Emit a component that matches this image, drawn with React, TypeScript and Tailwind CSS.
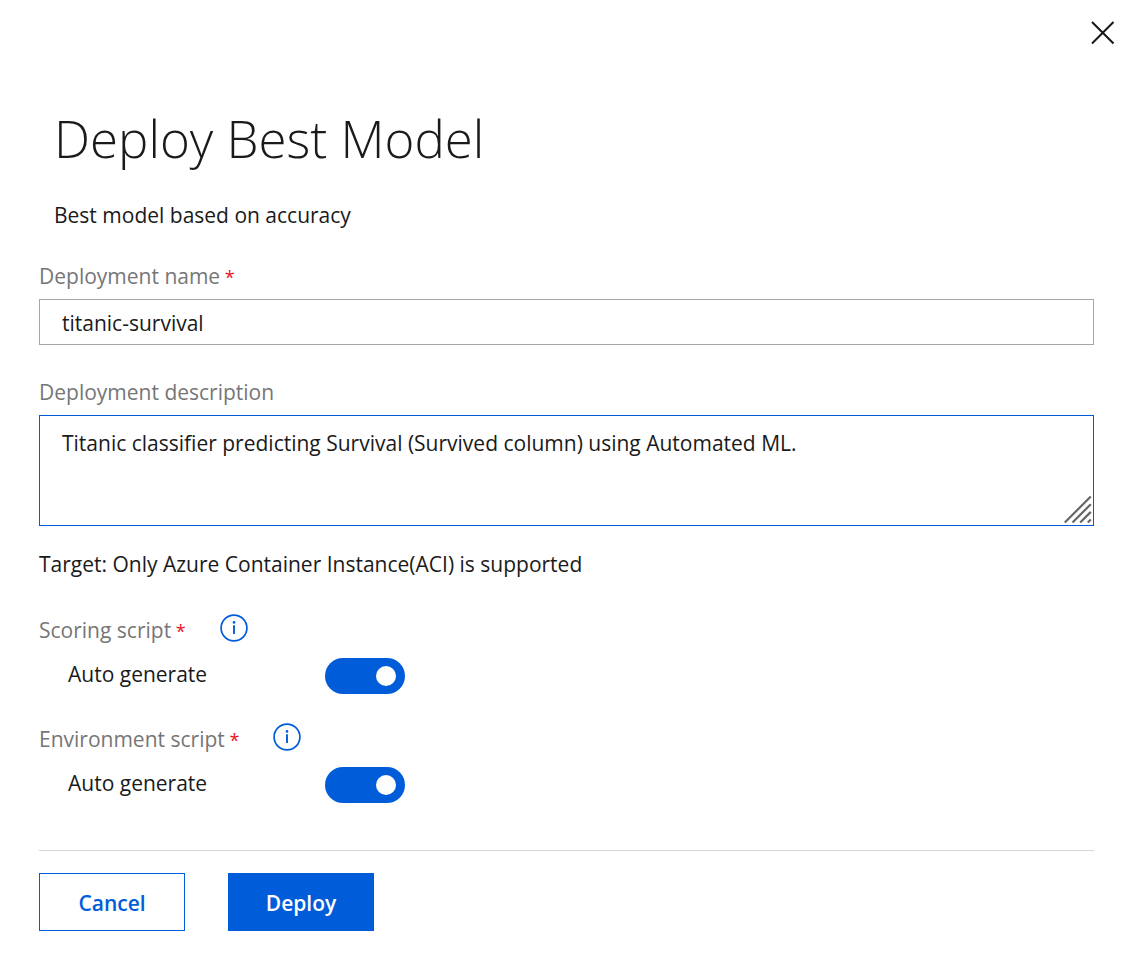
import { useState } from "react";
import type { ReactNode } from "react";

function Required() {
  return <span className="text-[18px] leading-none text-[#e81123]"> *</span>;
}

function InfoIcon() {
  return (
    <svg width="28" height="28" viewBox="0 0 28 28" fill="none" stroke="#015cda" aria-hidden="true">
      <circle cx="14" cy="14" r="12.9" strokeWidth="1.7" />
      <path d="M14 11.2V20" strokeWidth="1.9" />
      <circle cx="14" cy="8.4" r="1.3" fill="#015cda" stroke="none" />
    </svg>
  );
}

function ScriptSetting({ id, label }: { id: string; label: ReactNode }) {
  const [on, setOn] = useState(true);
  return (
    <section>
      <div className="flex h-8 items-center gap-[34px]">
        <h2 className="text-[#767676]">
          {label}
          <Required />
        </h2>
        <button type="button" aria-label={`About ${id}`} className="-mt-1">
          <InfoIcon />
        </button>
      </div>
      <label className="mt-3 flex h-9 items-center pl-[29px]">
        <span className="w-[257px] pb-1">Auto generate</span>
        <span className="relative flex h-9 w-20">
          <input
            type="checkbox"
            role="switch"
            checked={on}
            onChange={() => setOn(!on)}
            className="peer h-9 w-20 appearance-none rounded-full bg-[#767676] checked:bg-[#015cda]"
          />
          <span className="pointer-events-none absolute top-2 left-2 size-5 rounded-full bg-white peer-checked:left-[51px]" />
        </span>
      </label>
    </section>
  );
}

export default function App() {
  return (
    <main className="min-h-screen bg-white pt-[18px] font-['Open_Sans','Noto_Sans',sans-serif] text-[21px] leading-7 text-[#1a1a1a]">
      <div className="flex justify-end pr-[29px]">
        <button type="button" aria-label="Close" className="size-7">
          <svg viewBox="0 0 28 28" width="28" height="28" fill="none" stroke="#171717" strokeWidth="2" aria-hidden="true">
            <path d="M3 4L24.5 25.5M24.5 4L3 25.5" />
          </svg>
        </button>
      </div>
      <form className="pr-[52px] pl-[39px]" onSubmit={(e) => e.preventDefault()}>
        <header className="pt-[52px] pl-[15px]">
          <h1 className="text-[51px] leading-[80px] font-light">Deploy Best Model</h1>
          <p className="mt-[23px]">Best model based on accuracy</p>
        </header>
        <label htmlFor="name" className="mt-[33px] block text-[#767676]">
          Deployment name
          <Required />
        </label>
        <input
          id="name"
          defaultValue="titanic-survival"
          className="mt-[9px] block h-[46px] w-full border border-[#a6a6a6] px-[22px] pt-0.5 outline-none"
        />
        <label htmlFor="description" className="mt-[33px] block text-[#767676]">
          Deployment description
        </label>
        <div className="relative mt-[9px]">
          <textarea
            id="description"
            defaultValue="Titanic classifier predicting Survival (Survived column) using Automated ML."
            className="block h-[111px] w-full resize-none border border-[#015cda] px-[22px] py-[13px] outline-none"
          />
          <svg className="pointer-events-none absolute right-[2px] bottom-[2px]" width="28" height="28" viewBox="0 0 28 28" stroke="#666" strokeWidth="2.2" aria-hidden="true">
            <path d="M0.8 26.5L26.8 0.5M8.5 26.5L26.8 8.2M16.2 26.5L26.8 15.9M23.8 26.5L26.8 23.5" />
          </svg>
        </div>
        <p className="mt-6">Target: Only Azure Container Instance(ACI) is supported</p>
        <div className="mt-9 space-y-[29px]">
          <ScriptSetting id="scoring script" label="Scoring script" />
          <ScriptSetting id="environment script" label="Environment script" />
        </div>
        <footer className="mt-[47px] flex gap-[43px] border-t border-[#d6d6d6] pt-[22px] font-semibold">
          <button type="button" className="h-[58px] w-[146px] border border-[#015cda] pt-0.5 text-[#015cda]">
            Cancel
          </button>
          <button type="submit" className="h-[58px] w-[146px] bg-[#015cda] pt-0.5 text-white">
            Deploy
          </button>
        </footer>
      </form>
    </main>
  );
}
